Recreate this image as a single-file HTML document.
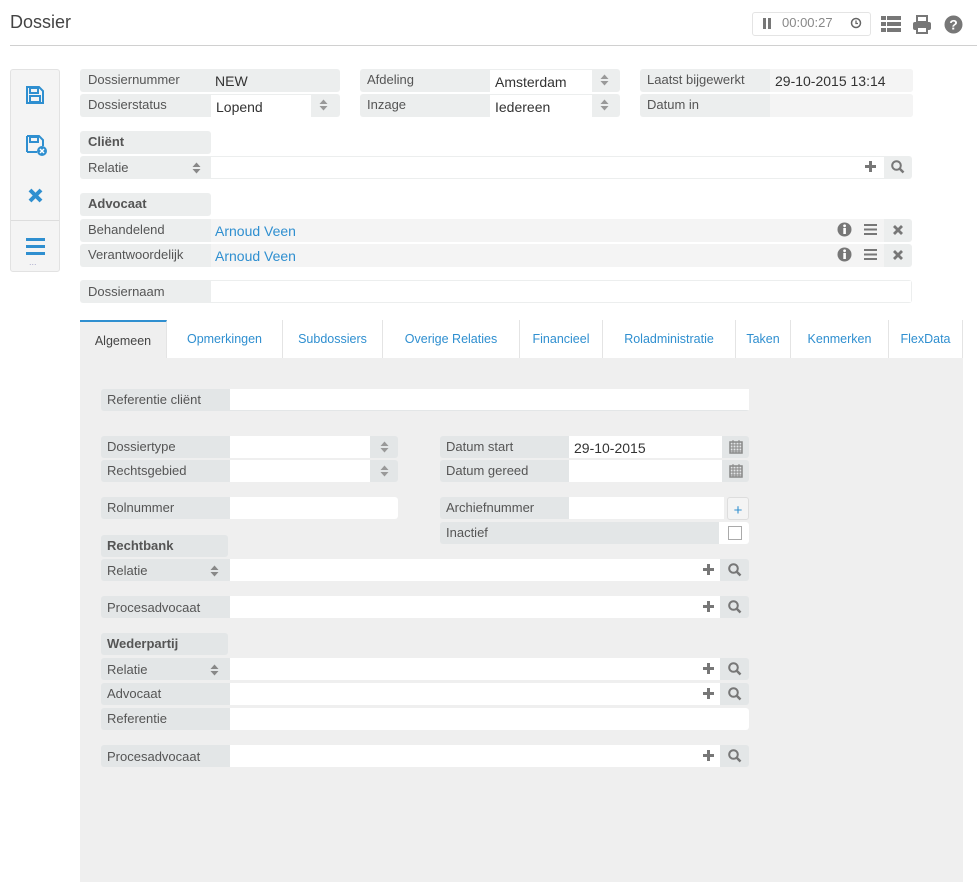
<!DOCTYPE html>
<html><head><meta charset="utf-8"><style>
*{box-sizing:border-box;margin:0;padding:0}
body{width:977px;height:892px;background:#fff;font-family:"Liberation Sans",sans-serif;color:#444;position:relative;overflow:hidden}
.a{position:absolute}
.lb{position:absolute;background:#eceeee;border-radius:3px}
.lb2{position:absolute;background:#e3e6e7;border-radius:3px}
.t{position:absolute;font-size:13px;color:#555;line-height:22px}
.w{position:absolute;background:#fff}
.v{position:absolute;font-size:14px;color:#333;line-height:24px}
.blue{color:#2f8fd0}
.tab{position:absolute;top:320px;height:38px;border-right:1px solid #e4e4e4;font-size:12.5px;color:#2f8fd0;text-align:center;line-height:38px;background:#fff}
.hdr{font-weight:bold;color:#555}
</style></head><body>
<div class="a" style="left:10px;top:12px;font-size:18px;color:#444">Dossier</div>
<div class="a" style="left:10px;top:45px;width:967px;height:1px;background:#d0d0d0"></div>
<div class="a" style="left:752px;top:12px;width:119px;height:24px;border:1px solid #e4e4e4;border-radius:3px"></div>
<div class="a" style="left:763px;top:18px;width:3px;height:11px;background:#777"></div>
<div class="a" style="left:768px;top:18px;width:3px;height:11px;background:#777"></div>
<div class="a" style="left:782px;top:15px;font-size:13px;color:#888">00:00:27</div>
<svg class="a" style="left:850px;top:17px" width="12" height="12"><circle cx="6" cy="6" r="4.5" fill="none" stroke="#666" stroke-width="1.5"/><path d="M6 3.5V6.5H8" stroke="#666" fill="none" stroke-width="1.3"/></svg>
<svg class="a" style="left:881px;top:15px" width="20" height="18"><g fill="#777"><rect x="0" y="1" width="5" height="4"/><rect x="6" y="1" width="14" height="4"/><rect x="0" y="7" width="5" height="4"/><rect x="6" y="7" width="14" height="4"/><rect x="0" y="13" width="5" height="4"/><rect x="6" y="13" width="14" height="4"/></g></svg>
<svg class="a" style="left:912px;top:15px" width="20" height="19"><g fill="#777"><rect x="5" y="1" width="10" height="6" fill="none" stroke="#777" stroke-width="2"/><rect x="1" y="7" width="18" height="8" rx="2"/><rect x="5" y="12" width="10" height="6" fill="#fff" stroke="#777" stroke-width="2"/></g></svg>
<svg class="a" style="left:944px;top:15px" width="19" height="19"><circle cx="9.5" cy="9.5" r="9" fill="#777"/><text x="9.5" y="14.5" text-anchor="middle" font-family="Liberation Sans" font-weight="bold" font-size="14" fill="#fff">?</text></svg>

<!-- sidebar -->
<div class="a" style="left:10px;top:69px;width:50px;height:203px;background:#f4f4f4;border:1px solid #e2e2e2;border-radius:3px"></div>
<div class="a" style="left:11px;top:220px;width:48px;height:1px;background:#ddd"></div>
<svg class="a" style="left:26px;top:86px" width="18" height="18"><path d="M1 1H13L17 5V17H1Z" fill="none" stroke="#2f8fd0" stroke-width="2"/><rect x="4" y="2" width="8" height="5" fill="none" stroke="#2f8fd0" stroke-width="2"/><rect x="4" y="10" width="10" height="6" fill="none" stroke="#2f8fd0" stroke-width="2"/></svg>
<svg class="a" style="left:26px;top:135px" width="22" height="22"><path d="M1 1H13L17 5V11M11 17H1Z" fill="none" stroke="#2f8fd0" stroke-width="2"/><path d="M1 1V17" stroke="#2f8fd0" stroke-width="2"/><rect x="4" y="2" width="8" height="5" fill="none" stroke="#2f8fd0" stroke-width="2"/><circle cx="16" cy="16" r="5" fill="#2f8fd0"/><path d="M14 14L18 18M18 14L14 18" stroke="#fff" stroke-width="1.5"/></svg>
<svg class="a" style="left:28px;top:188px" width="15" height="15"><path d="M2 2L13 13M13 2L2 13" stroke="#2f8fd0" stroke-width="4"/></svg>
<svg class="a" style="left:26px;top:238px" width="19" height="17"><g fill="#2f8fd0"><rect y="0" width="19" height="3"/><rect y="7" width="19" height="3"/><rect y="14" width="19" height="3"/></g></svg>
<div class="a" style="left:29px;top:257px;font-size:9px;color:#aac">...</div>

<!-- top form -->
<div class="lb" style="left:80px;top:69px;width:260px;height:23px"></div><div class="t" style="left:88px;top:69px">Dossiernummer</div><div class="v" style="left:215px;top:69px">NEW</div>
<div class="lb" style="left:80px;top:94px;width:260px;height:23px"></div><div class="t" style="left:88px;top:94px">Dossierstatus</div><div class="w" style="left:211px;top:95px;width:100px;height:22px"></div><div class="v" style="left:216px;top:95px">Lopend</div>
<svg class="a" style="left:319px;top:99px" width="9" height="12"><path d="M0.5 5L4.5 0.5 8.5 5ZM0.5 7L4.5 11.5 8.5 7Z" fill="#999"/></svg>
<div class="lb" style="left:360px;top:69px;width:260px;height:23px"></div><div class="t" style="left:367px;top:69px">Afdeling</div><div class="w" style="left:490px;top:70px;width:102px;height:22px"></div><div class="v" style="left:495px;top:70px">Amsterdam</div>
<svg class="a" style="left:600px;top:74px" width="9" height="12"><path d="M0.5 5L4.5 0.5 8.5 5ZM0.5 7L4.5 11.5 8.5 7Z" fill="#999"/></svg>
<div class="lb" style="left:360px;top:94px;width:260px;height:23px"></div><div class="t" style="left:367px;top:94px">Inzage</div><div class="w" style="left:490px;top:95px;width:102px;height:22px"></div><div class="v" style="left:495px;top:95px">Iedereen</div>
<svg class="a" style="left:600px;top:99px" width="9" height="12"><path d="M0.5 5L4.5 0.5 8.5 5ZM0.5 7L4.5 11.5 8.5 7Z" fill="#999"/></svg>
<div class="lb" style="left:640px;top:69px;width:273px;height:23px"></div><div class="a" style="left:770px;top:69px;width:143px;height:23px;background:#f4f4f4;border-radius:0 3px 3px 0"></div><div class="t" style="left:647px;top:69px">Laatst bijgewerkt</div><div class="v" style="left:775px;top:69px">29-10-2015 13:14</div>
<div class="lb" style="left:640px;top:94px;width:273px;height:23px"></div><div class="a" style="left:770px;top:94px;width:143px;height:23px;background:#f4f4f4;border-radius:0 3px 3px 0"></div><div class="t" style="left:647px;top:94px">Datum in</div>

<div class="lb" style="left:80px;top:131px;width:131px;height:23px"></div><div class="t hdr" style="left:88px;top:131px">Cliënt</div>
<div class="lb" style="left:80px;top:156px;width:832px;height:23px"></div><div class="w" style="left:211px;top:157px;width:673px;height:21px"></div><div class="t" style="left:88px;top:157px">Relatie</div>
<svg class="a" style="left:192px;top:162px" width="9" height="12"><path d="M0.5 5L4.5 0.5 8.5 5ZM0.5 7L4.5 11.5 8.5 7Z" fill="#888"/></svg>
<svg class="a" style="left:865px;top:161px" width="11" height="11"><path d="M5.5 0V11M0 5.5H11" stroke="#777" stroke-width="3"/></svg>
<svg class="a" style="left:891px;top:160px" width="14" height="14"><circle cx="5.5" cy="5.5" r="4.3" fill="none" stroke="#777" stroke-width="2"/><path d="M8.5 8.5L12.5 12.5" stroke="#777" stroke-width="2.5"/></svg>

<div class="lb" style="left:80px;top:193px;width:131px;height:23px"></div><div class="t hdr" style="left:88px;top:193px">Advocaat</div>
<div class="lb" style="left:80px;top:219px;width:832px;height:23px"></div><div class="a" style="left:211px;top:219px;width:673px;height:23px;background:#f4f4f4"></div><div class="t" style="left:88px;top:219px">Behandelend</div><div class="v blue" style="left:215px;top:219px">Arnoud Veen</div>
<div class="lb" style="left:80px;top:244px;width:832px;height:23px"></div><div class="a" style="left:211px;top:244px;width:673px;height:23px;background:#f4f4f4"></div><div class="t" style="left:88px;top:244px">Verantwoordelijk</div><div class="v blue" style="left:215px;top:244px">Arnoud Veen</div>
<svg class="a" style="left:837px;top:222px" width="15" height="15"><circle cx="7.5" cy="7.5" r="7" fill="#777"/><rect x="6.3" y="6" width="2.6" height="6" fill="#fff"/><circle cx="7.6" cy="3.8" r="1.4" fill="#fff"/></svg>
<svg class="a" style="left:864px;top:224px" width="13" height="11"><g fill="#777"><rect y="0" width="13" height="2"/><rect y="4.5" width="13" height="2"/><rect y="9" width="13" height="2"/></g></svg>
<svg class="a" style="left:893px;top:225px" width="10" height="10"><path d="M1 1L9 9M9 1L1 9" stroke="#777" stroke-width="2.8"/></svg>
<svg class="a" style="left:837px;top:247px" width="15" height="15"><circle cx="7.5" cy="7.5" r="7" fill="#777"/><rect x="6.3" y="6" width="2.6" height="6" fill="#fff"/><circle cx="7.6" cy="3.8" r="1.4" fill="#fff"/></svg>
<svg class="a" style="left:864px;top:249px" width="13" height="11"><g fill="#777"><rect y="0" width="13" height="2"/><rect y="4.5" width="13" height="2"/><rect y="9" width="13" height="2"/></g></svg>
<svg class="a" style="left:893px;top:250px" width="10" height="10"><path d="M1 1L9 9M9 1L1 9" stroke="#777" stroke-width="2.8"/></svg>

<div class="lb" style="left:80px;top:280px;width:832px;height:23px"></div><div class="w" style="left:211px;top:281px;width:700px;height:21px"></div><div class="t" style="left:88px;top:281px">Dossiernaam</div>

<!-- tabs -->
<div class="a" style="left:80px;top:320px;width:883px;height:562px;background:#efefef"></div>
<div class="a" style="left:80px;top:320px;width:883px;height:38px;background:#fff;border-top:1px solid #e4e4e4;border-right:1px solid #e4e4e4"></div>
<div class="a" style="left:167px;top:357px;width:796px;height:1px;background:#ddd"></div>
<div class="tab" style="left:80px;width:87px;background:#efefef;color:#444;border-top:2px solid #2f8fd0;line-height:38px">Algemeen</div>
<div class="tab" style="left:167px;width:116px">Opmerkingen</div>
<div class="tab" style="left:283px;width:100px">Subdossiers</div>
<div class="tab" style="left:383px;width:137px">Overige Relaties</div>
<div class="tab" style="left:520px;width:83px">Financieel</div>
<div class="tab" style="left:603px;width:133px">Roladministratie</div>
<div class="tab" style="left:736px;width:55px">Taken</div>
<div class="tab" style="left:791px;width:98px">Kenmerken</div>
<div class="tab" style="left:889px;width:74px">FlexData</div>

<!-- inner form -->
<div class="lb2" style="left:101px;top:389px;width:648px;height:22px"></div><div class="w" style="left:230px;top:389px;width:519px;height:21px"></div><div class="t" style="left:107px;top:389px">Referentie cliënt</div>

<div class="lb2" style="left:101px;top:436px;width:297px;height:22px"></div><div class="w" style="left:230px;top:436px;width:140px;height:22px"></div><div class="t" style="left:107px;top:436px">Dossiertype</div>
<svg class="a" style="left:380px;top:441px" width="9" height="12"><path d="M0.5 5L4.5 0.5 8.5 5ZM0.5 7L4.5 11.5 8.5 7Z" fill="#999"/></svg>
<div class="lb2" style="left:101px;top:460px;width:297px;height:22px"></div><div class="w" style="left:230px;top:460px;width:140px;height:22px"></div><div class="t" style="left:107px;top:460px">Rechtsgebied</div>
<svg class="a" style="left:380px;top:465px" width="9" height="12"><path d="M0.5 5L4.5 0.5 8.5 5ZM0.5 7L4.5 11.5 8.5 7Z" fill="#999"/></svg>

<div class="lb2" style="left:440px;top:436px;width:309px;height:22px"></div><div class="w" style="left:569px;top:436px;width:153px;height:22px"></div><div class="t" style="left:446px;top:436px">Datum start</div><div class="v" style="left:574px;top:436px">29-10-2015</div>
<div class="lb2" style="left:440px;top:460px;width:309px;height:22px"></div><div class="w" style="left:569px;top:460px;width:153px;height:22px"></div><div class="t" style="left:446px;top:460px">Datum gereed</div>
<svg class="a" style="left:729px;top:439px" width="14" height="15"><rect x="1" y="3" width="12" height="11" fill="none" stroke="#888" stroke-width="1.5"/><path d="M1 6H13M1 9H13M1 12H13M4 3V14M7 3V14M10 3V14M4 1V4M10 1V4" stroke="#888" stroke-width="1"/></svg>
<svg class="a" style="left:729px;top:463px" width="14" height="15"><rect x="1" y="3" width="12" height="11" fill="none" stroke="#888" stroke-width="1.5"/><path d="M1 6H13M1 9H13M1 12H13M4 3V14M7 3V14M10 3V14M4 1V4M10 1V4" stroke="#888" stroke-width="1"/></svg>

<div class="lb2" style="left:101px;top:497px;width:297px;height:22px"></div><div class="w" style="left:230px;top:497px;width:168px;height:22px;border-radius:0 3px 3px 0"></div><div class="t" style="left:107px;top:497px">Rolnummer</div>
<div class="lb2" style="left:440px;top:497px;width:284px;height:22px"></div><div class="w" style="left:569px;top:497px;width:155px;height:22px"></div><div class="t" style="left:446px;top:497px">Archiefnummer</div>
<div class="a" style="left:727px;top:497px;width:22px;height:23px;border:1px solid #ddd;border-radius:3px;background:#f4f4f4;color:#2f8fd0;font-size:15px;text-align:center;line-height:26px">+</div>
<div class="lb2" style="left:440px;top:522px;width:309px;height:22px"></div><div class="w" style="left:719px;top:522px;width:30px;height:22px;border-radius:0 3px 3px 0"></div><div class="a" style="left:728px;top:526px;width:14px;height:14px;border:1px solid #aaa"></div><div class="t" style="left:446px;top:522px">Inactief</div>

<div class="lb2" style="left:101px;top:535px;width:127px;height:22px"></div><div class="t hdr" style="left:107px;top:535px">Rechtbank</div>
<div class="lb2" style="left:101px;top:559px;width:648px;height:22px"></div><div class="w" style="left:230px;top:559px;width:490px;height:22px"></div><div class="t" style="left:107px;top:560px">Relatie</div>
<svg class="a" style="left:210px;top:565px" width="9" height="12"><path d="M0.5 5L4.5 0.5 8.5 5ZM0.5 7L4.5 11.5 8.5 7Z" fill="#888"/></svg>
<div class="lb2" style="left:101px;top:596px;width:648px;height:22px"></div><div class="w" style="left:230px;top:596px;width:490px;height:22px"></div><div class="t" style="left:107px;top:597px">Procesadvocaat</div>

<div class="lb2" style="left:101px;top:633px;width:127px;height:22px"></div><div class="t hdr" style="left:107px;top:633px">Wederpartij</div>
<div class="lb2" style="left:101px;top:658px;width:648px;height:22px"></div><div class="w" style="left:230px;top:658px;width:490px;height:22px"></div><div class="t" style="left:107px;top:659px">Relatie</div>
<svg class="a" style="left:210px;top:664px" width="9" height="12"><path d="M0.5 5L4.5 0.5 8.5 5ZM0.5 7L4.5 11.5 8.5 7Z" fill="#888"/></svg>
<div class="lb2" style="left:101px;top:683px;width:648px;height:22px"></div><div class="w" style="left:230px;top:683px;width:490px;height:22px"></div><div class="t" style="left:107px;top:683px">Advocaat</div>
<div class="lb2" style="left:101px;top:708px;width:648px;height:22px"></div><div class="w" style="left:230px;top:708px;width:519px;height:22px;border-radius:0 3px 3px 0"></div><div class="t" style="left:107px;top:708px">Referentie</div>
<div class="lb2" style="left:101px;top:745px;width:648px;height:22px"></div><div class="w" style="left:230px;top:745px;width:490px;height:22px"></div><div class="t" style="left:107px;top:746px">Procesadvocaat</div>

<svg class="a" style="left:703px;top:564px" width="11" height="11"><path d="M5.5 0V11M0 5.5H11" stroke="#777" stroke-width="3"/></svg>
<svg class="a" style="left:728px;top:563px" width="14" height="14"><circle cx="5.5" cy="5.5" r="4.3" fill="none" stroke="#777" stroke-width="2"/><path d="M8.5 8.5L12.5 12.5" stroke="#777" stroke-width="2.5"/></svg>
<svg class="a" style="left:703px;top:601px" width="11" height="11"><path d="M5.5 0V11M0 5.5H11" stroke="#777" stroke-width="3"/></svg>
<svg class="a" style="left:728px;top:600px" width="14" height="14"><circle cx="5.5" cy="5.5" r="4.3" fill="none" stroke="#777" stroke-width="2"/><path d="M8.5 8.5L12.5 12.5" stroke="#777" stroke-width="2.5"/></svg>
<svg class="a" style="left:703px;top:663px" width="11" height="11"><path d="M5.5 0V11M0 5.5H11" stroke="#777" stroke-width="3"/></svg>
<svg class="a" style="left:728px;top:662px" width="14" height="14"><circle cx="5.5" cy="5.5" r="4.3" fill="none" stroke="#777" stroke-width="2"/><path d="M8.5 8.5L12.5 12.5" stroke="#777" stroke-width="2.5"/></svg>
<svg class="a" style="left:703px;top:688px" width="11" height="11"><path d="M5.5 0V11M0 5.5H11" stroke="#777" stroke-width="3"/></svg>
<svg class="a" style="left:728px;top:687px" width="14" height="14"><circle cx="5.5" cy="5.5" r="4.3" fill="none" stroke="#777" stroke-width="2"/><path d="M8.5 8.5L12.5 12.5" stroke="#777" stroke-width="2.5"/></svg>
<svg class="a" style="left:703px;top:750px" width="11" height="11"><path d="M5.5 0V11M0 5.5H11" stroke="#777" stroke-width="3"/></svg>
<svg class="a" style="left:728px;top:749px" width="14" height="14"><circle cx="5.5" cy="5.5" r="4.3" fill="none" stroke="#777" stroke-width="2"/><path d="M8.5 8.5L12.5 12.5" stroke="#777" stroke-width="2.5"/></svg>
</body></html>
